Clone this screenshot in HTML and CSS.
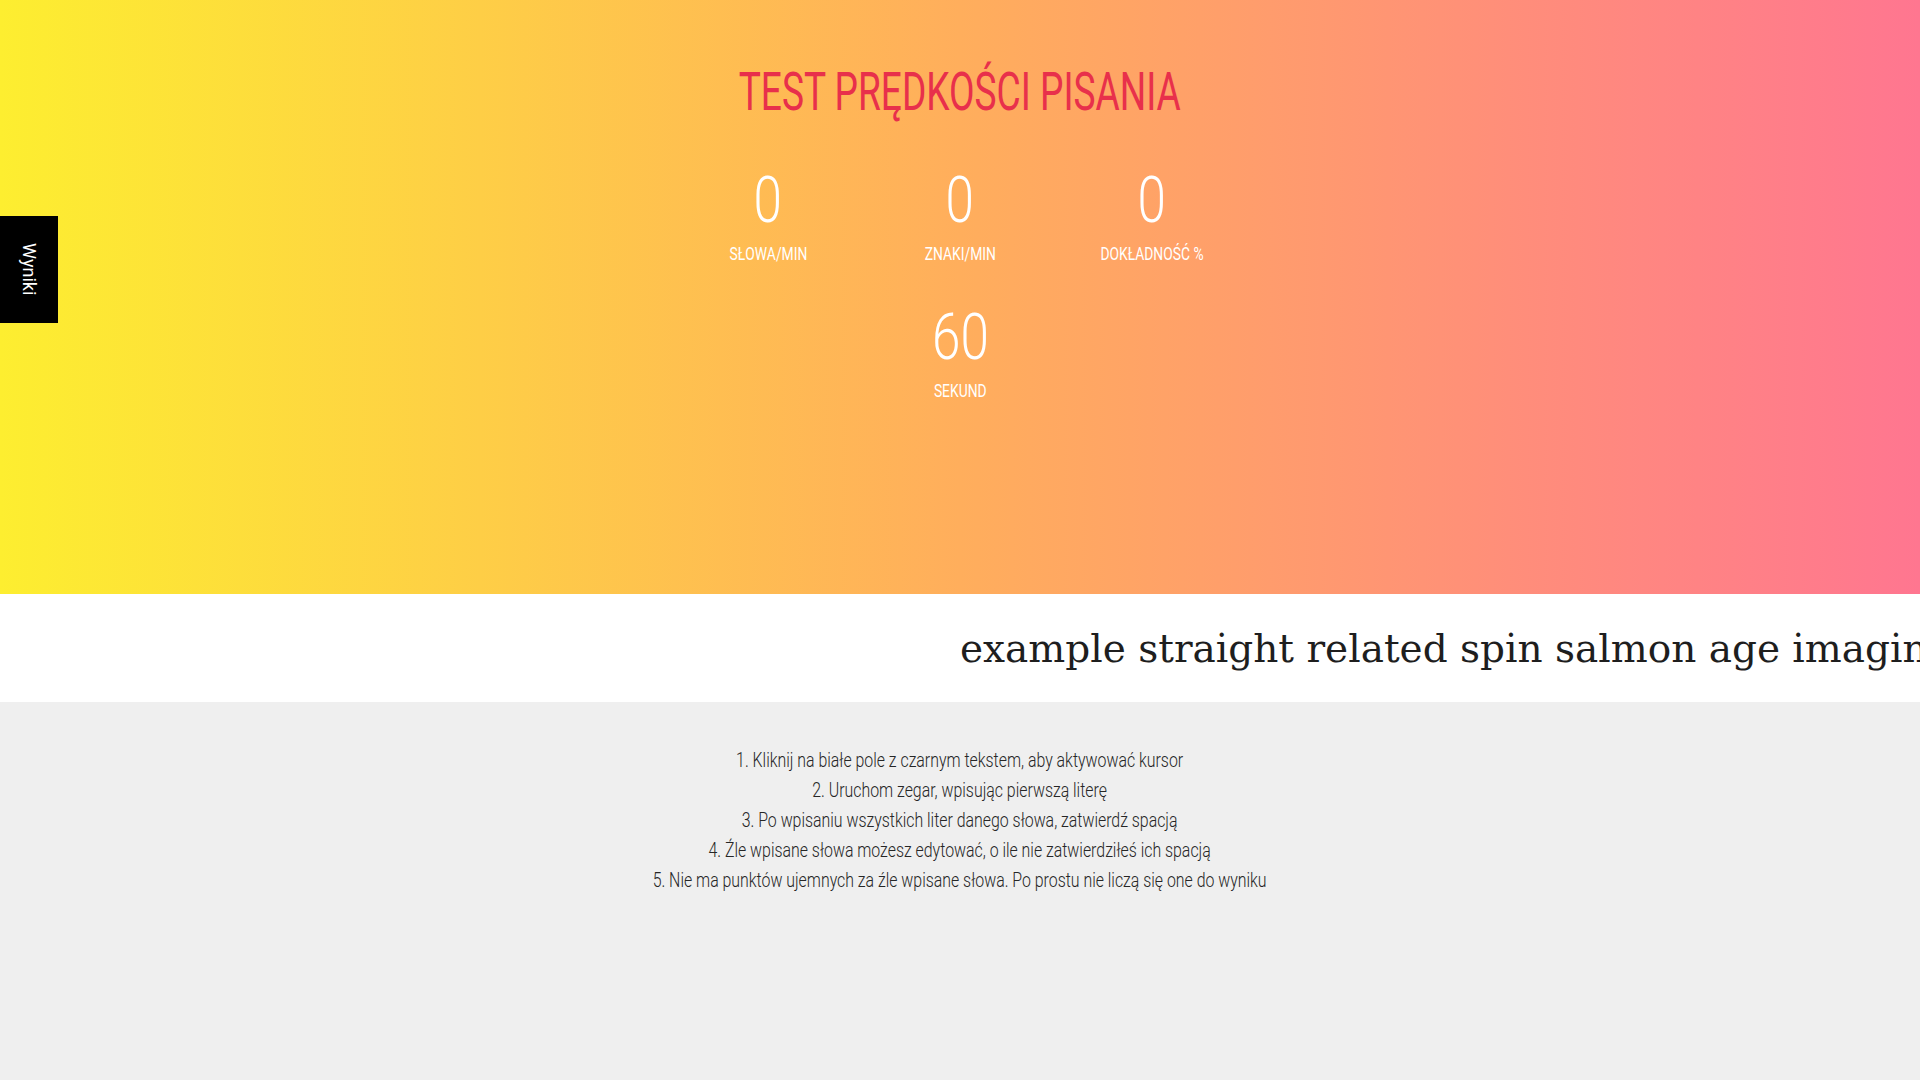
FILE: index.html
```html
<!DOCTYPE html>
<html lang="pl">
<head>
<meta charset="utf-8">
<title>Test prędkości pisania</title>
<link rel="stylesheet" href="styles.css">
</head>
<body>
<a class="results-tab" href="#">Wyniki</a>
<header class="hero">
  <h1 class="title">TEST PRĘDKOŚCI PISANIA</h1>
  <div class="stats">
    <div class="stat">
      <div class="stat-value">0</div>
      <div class="stat-label">SŁOWA/MIN</div>
    </div>
    <div class="stat">
      <div class="stat-value">0</div>
      <div class="stat-label">ZNAKI/MIN</div>
    </div>
    <div class="stat">
      <div class="stat-value">0</div>
      <div class="stat-label">DOKŁADNOŚĆ %</div>
    </div>
    <div class="stat stat-timer">
      <div class="stat-value">60</div>
      <div class="stat-label">SEKUND</div>
    </div>
  </div>
</header>
<section class="typing">
  <div class="words">example straight related spin salmon age imagine window history pocket morning bright</div>
</section>
<section class="instructions">
  <div class="steps">
    <p>1. Kliknij na białe pole z czarnym tekstem, aby aktywować kursor</p>
    <p>2. Uruchom zegar, wpisując pierwszą literę</p>
    <p>3. Po wpisaniu wszystkich liter danego słowa, zatwierdź spacją</p>
    <p>4. Źle wpisane słowa możesz edytować, o ile nie zatwierdziłeś ich spacją</p>
    <p>5. Nie ma punktów ujemnych za źle wpisane słowa. Po prostu nie liczą się one do wyniku</p>
  </div>
</section>
</body>
</html>
```

FILE: styles.css
```css
html, body {
  margin: 0;
  padding: 0;
}
body {
  background: #efefef;
  font-family: Roboto, "Liberation Sans", sans-serif;
  overflow: hidden;
}
.hero {
  height: 594px;
  box-sizing: border-box;
  padding-top: 66px;
  background: linear-gradient(to right, #fdee30 0%, #ffae5c 50%, #ff7690 100%);
  display: flex;
  flex-direction: column;
  align-items: center;
}
.title {
  margin: 0;
  font-family: Roboto, "Liberation Sans", sans-serif;
  font-weight: 400;
  font-size: 53px;
  line-height: 53px;
  white-space: nowrap;
  color: #e8304b;
  transform: scaleX(0.70);
}
.stats {
  margin-top: 50px;
  display: grid;
  grid-template-columns: repeat(3, 192px);
  row-gap: 42px;
  color: #fff;
  text-align: center;
}
.stat {
  display: flex;
  flex-direction: column;
  align-items: center;
}
.stat-value {
  font-size: 64px;
  line-height: 64px;
  font-weight: 300;
  transform: scaleX(0.8);
}
.stat-label {
  margin-top: 11px;
  font-size: 18px;
  line-height: 20px;
  font-weight: 400;
  white-space: nowrap;
  transform: scaleX(0.77);
}
.stat-timer {
  grid-column: 2;
}
.typing {
  height: 108px;
  background: #fff;
  overflow: hidden;
  display: flex;
  align-items: center;
}
.words {
  padding-left: 960px;
  white-space: nowrap;
  font-family: "DejaVu Serif", "Liberation Serif", serif;
  font-size: 39px;
  color: #1e1e1e;
}
.instructions {
  padding-top: 43px;
  display: flex;
  justify-content: center;
}
.steps {
  text-align: center;
  color: #262626;
  font-size: 20px;
  line-height: 30px;
  font-weight: 300;
  white-space: nowrap;
  transform: scaleX(0.794);
}
.steps p {
  margin: 0;
}
.results-tab {
  position: fixed;
  left: 0;
  top: 216px;
  width: 58px;
  height: 107px;
  background: #000;
  color: #fff;
  text-decoration: none;
  writing-mode: vertical-rl;
  display: flex;
  align-items: center;
  justify-content: center;
  font-family: Roboto, "Liberation Sans", sans-serif;
  font-size: 18px;
}
```
